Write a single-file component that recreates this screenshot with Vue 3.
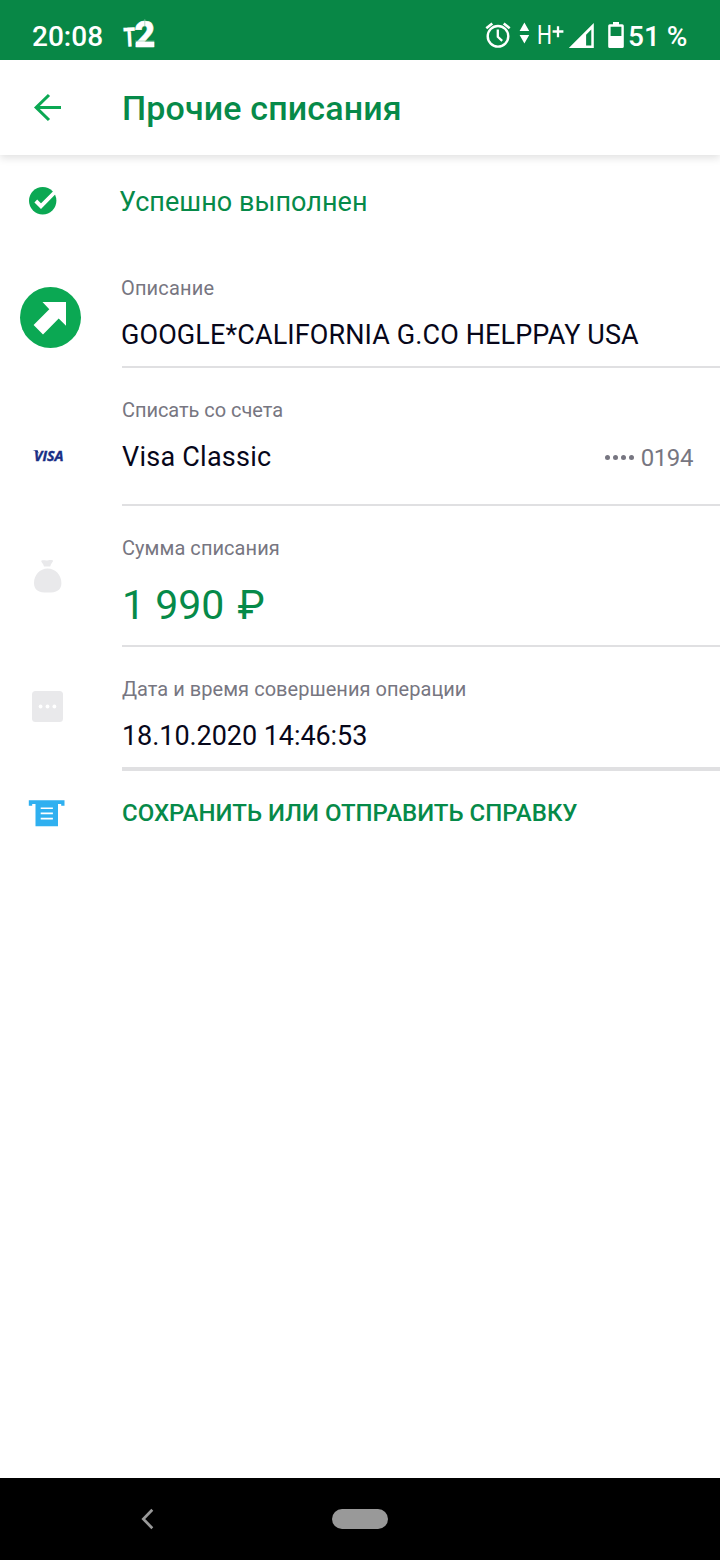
<script setup>
const rows = [
  { kind: 'transfer', label: 'Описание', value: 'GOOGLE*CALIFORNIA G.CO HELPPAY USA' },
  { kind: 'card', label: 'Списать со счета', value: 'Visa Classic', extra: '0194' },
  { kind: 'amount', label: 'Сумма списания', value: '1 990', currency: '₽' },
  { kind: 'date', label: 'Дата и время совершения операции', value: '18.10.2020 14:46:53' },
]
</script>

<template>
  <div class="screen">
    <div class="status">
      <span class="time">20:08</span>
      <svg class="carrier" width="38" height="44" viewBox="120 16 38 44">
        <text class="logo-t" x="124" y="46.800" textLength="12" lengthAdjust="spacingAndGlyphs" transform="rotate(-3 130 46)">T</text>
        <text class="logo-two" x="134.500" y="47" textLength="20.500" lengthAdjust="spacingAndGlyphs">2</text>
        <path d="M135.800 41.500h18.400V47h-18.400z" fill="#fff" />
        <path d="M144.800 19v8M135 41h19.500" stroke="#7fc09d" stroke-width=".6" />
      </svg>
      <span class="grow"></span>
      <svg class="tray" width="144" height="36" viewBox="484 16 144 36">
        <g fill="none" stroke="#fff">
          <circle cx="498" cy="36.300" r="10.300" stroke-width="2.400" />
          <path d="M497.800 29.600v7.200l4.400 4" stroke-width="2.300" />
          <path d="M486.300 28.200l6-4.800M509.700 28.200l-6-4.800" stroke-width="2.600" />
          <path d="M558 26.300v11M552.600 31.500h10.800" stroke-width="2.300" />
        </g>
        <path d="M524.400 22.500l4.800 8.500h-9.600zM524.400 43.400l4.800-8.500h-9.600z" fill="#fff" />
        <text class="net" x="537" y="44" textLength="15" lengthAdjust="spacingAndGlyphs">H</text>
        <path d="M593.800 23v25h-25zM591.300 29.500l-5.200 5.300v10.600h5.200z" fill="#fff" fill-rule="evenodd" />
        <path d="M613 22h6v2.200h3.200a1.600 1.600 0 0 1 1.600 1.600v20.600a1.600 1.600 0 0 1-1.600 1.600h-12.400a1.600 1.600 0 0 1-1.600-1.600v-20.600a1.600 1.600 0 0 1 1.600-1.600h3.200zM610.600 26.700v9.300h10.800v-9.300z" fill="#fff" fill-rule="evenodd" />
      </svg>
      <span class="level">51 %</span>
    </div>

    <header class="bar">
      <div class="cell">
        <svg class="back" width="30" height="30" viewBox="0 0 30 30">
          <path d="M29 14.500H4M17 2L4.200 14.500 17 27" fill="none" stroke="#0ba853" stroke-width="3.100" />
        </svg>
      </div>
      <h1>Прочие списания</h1>
    </header>

    <section class="result">
      <div class="cell">
        <svg class="done" width="28" height="28" viewBox="0 0 28 28">
          <circle cx="13.700" cy="13.700" r="13.700" fill="#0ba853" />
          <path d="M6.800 14l5.200 5.200L26 5" fill="none" stroke="#fff" stroke-width="3.900" />
        </svg>
      </div>
      <p>Успешно выполнен</p>
    </section>

    <section v-for="row in rows" :key="row.kind" class="row" :class="row.kind">
      <div class="cell">
        <svg v-if="row.kind === 'transfer'" class="icon" width="61" height="61" viewBox="0 0 61 61">
          <circle cx="30.500" cy="30.500" r="30.500" fill="#0ba853" />
          <path d="M22.500 15h23.500v23.700l-7.300-7.200-15.700 16L13.600 38l15.700-15.700z" fill="#fff" />
        </svg>
        <svg v-else-if="row.kind === 'card'" class="icon" width="40" height="24" viewBox="0 -4 40 24">
          <text class="visa" x="4" y="13" textLength="29.500" lengthAdjust="spacingAndGlyphs">VISA</text>
          <path d="M2.500 2.300h5l1.300 3.300C7.500 4 5 2.900 2.500 2.300z" fill="#182e86" />
        </svg>
        <svg v-else-if="row.kind === 'amount'" class="icon" width="28" height="34" viewBox="0 0 28 34">
          <path d="M7.300 .7C9-.3 11 .7 13.500.4S17.500-.2 19 .5c.7.500-2.400 3.300-2.800 5.900H10C9.600 3.800 6.500 1.500 7.300.7zM13.600 8.600C21.500 8.600 27.400 15.400 27.400 22.900c0 7.300-4.700 9.600-13.700 9.600S0 30.200 0 22.900C0 15.400 5.800 8.600 13.600 8.600z" fill="#e9e9eb" />
        </svg>
        <svg v-else class="icon" width="31" height="31" viewBox="0 0 31 31">
          <rect width="31" height="31" rx="3.500" fill="#e9e9eb" />
          <circle cx="8.600" cy="15.500" r="1.900" fill="#fff" />
          <circle cx="15.500" cy="15.500" r="1.900" fill="#fff" />
          <circle cx="22.400" cy="15.500" r="1.900" fill="#fff" />
        </svg>
      </div>
      <div class="body">
        <div class="label">{{ row.label }}</div>
        <div class="line">
          <span class="value">{{ row.value }}<span v-if="row.currency" class="currency">{{ ' ' + row.currency }}</span></span>
          <span v-if="row.extra" class="mask"><i v-for="n in 4" :key="n"></i>{{ row.extra }}</span>
        </div>
      </div>
    </section>

    <section class="save">
      <div class="cell">
        <svg class="printer" width="37" height="27" viewBox="0 0 37 27">
          <path d="M.8 .3h35.700v5.400h-3.300V4H30v22.200H7.500V4H4.200v1.700H.8z" fill="#2fb0f0" />
          <path d="M12.700 8.200h12.200M12.700 13.400h12.200M12.700 18.600h12.200" stroke="#fff" stroke-width="1.600" />
        </svg>
      </div>
      <span class="action">СОХРАНИТЬ ИЛИ ОТПРАВИТЬ СПРАВКУ</span>
    </section>

    <nav class="nav">
      <svg class="nav-back" width="14" height="22" viewBox="0 0 14 22">
        <path d="M12.300 1.800L3.300 11l9 9.200" fill="none" stroke="#999" stroke-width="2.700" />
      </svg>
      <span class="pill"></span>
    </nav>
  </div>
</template>

<style>
body {
  margin: 0;
  background: #fff;
}
</style>

<style scoped>
.screen {
  width: 720px;
  height: 1560px;
  display: flex;
  flex-direction: column;
  overflow: hidden;
  background: #fff;
  font-family: Roboto, "Liberation Sans", sans-serif;
  color: #07071a;
}
.status {
  height: 60px;
  flex: none;
  box-sizing: border-box;
  padding: 16px 0 0 32px;
  display: flex;
  align-items: flex-start;
  position: relative;
  z-index: 1;
  background: #088746;
  color: #fff;
}
.time,
.level {
  font-size: 28px;
  font-weight: 500;
  line-height: 41px;
  white-space: nowrap;
}
.time {
  width: 88px;
}
.level {
  width: 92px;
}
.carrier,
.tray,
.card .icon {
  overflow: visible;
}
.grow {
  flex: 1;
}
.logo-t {
  font-size: 27px;
  font-weight: 900;
  fill: #fff;
}
.logo-two {
  font-size: 37px;
  font-weight: 900;
  fill: #fff;
  stroke: #fff;
  stroke-width: 0.6px;
}
.net {
  font-size: 25px;
  font-weight: 400;
  fill: #fff;
}
.bar {
  height: 95px;
  flex: none;
  display: flex;
  align-items: flex-start;
  box-shadow: 0 3px 8px rgba(0, 0, 0, 0.12);
}
.cell {
  width: 122px;
  flex: none;
}
.cell svg {
  display: block;
}
.back {
  margin: 33px 0 0 32px;
}
h1 {
  margin: 0;
  font-size: 34px;
  font-weight: 500;
  line-height: 97px;
  letter-spacing: 0.14px;
  color: #068a49;
  white-space: nowrap;
}
.result {
  height: 91px;
  flex: none;
  display: flex;
}
.done {
  margin: 32px 0 0 29px;
}
.result p {
  margin: 31px 0 0 -3px;
  font-size: 27px;
  line-height: 32px;
  letter-spacing: 0.04px;
  color: #068a49;
}
.row {
  display: flex;
  flex: none;
  height: 122px;
}
.card {
  height: 138px;
}
.amount {
  height: 141px;
}
.date {
  height: 124px;
}
.transfer .icon {
  margin: 41px 0 0 20px;
}
.card .icon {
  margin: 76px 0 0 30px;
}
.amount .icon {
  margin: 54px 0 0 34px;
}
.date .icon {
  margin: 44px 0 0 32px;
}
.visa {
  font-family: "Open Sans", sans-serif;
  font-size: 14.8px;
  font-weight: 700;
  font-style: italic;
  fill: #182e86;
  stroke: #182e86;
  stroke-width: 0.4px;
}
.body {
  flex: 1;
  box-sizing: border-box;
  padding-top: 26px;
  border-bottom: 2px solid #e0e0e2;
}
.date .body {
  border-bottom-width: 4px;
}
.label {
  font-size: 20px;
  line-height: 32px;
  color: #777681;
  white-space: nowrap;
}
.line {
  display: flex;
  justify-content: space-between;
  margin-top: 15px;
  padding-right: 27px;
  font-size: 27px;
  line-height: 32px;
  white-space: nowrap;
}
.transfer .label,
.transfer .value {
  margin-left: -1px;
}
.transfer .label {
  letter-spacing: 0.16px;
}
.transfer .value {
  letter-spacing: 0.11px;
}
.card .label {
  letter-spacing: -0.05px;
}
.card .value {
  letter-spacing: 0.24px;
}
.amount .label {
  letter-spacing: 0.06px;
}
.amount .line {
  margin-top: 17px;
  font-size: 41px;
  line-height: 48px;
  color: #068a49;
}
.currency {
  margin-left: 3px;
}
.date .label {
  letter-spacing: 0.04px;
}
.date .value {
  letter-spacing: -0.06px;
}
.mask {
  display: flex;
  align-items: center;
  font-size: 24px;
  line-height: 34px;
  letter-spacing: -0.4px;
  color: #777681;
}
.mask i {
  width: 5px;
  height: 5px;
  margin: -2px 3px 0 0;
  border-radius: 50%;
  background: #777681;
}
.mask i:nth-child(4) {
  margin-right: 7px;
}
.save {
  display: flex;
  flex: 1;
}
.printer {
  margin: 29px 0 0 28px;
}
.action {
  margin-top: 26px;
  font-size: 24px;
  font-weight: 500;
  line-height: 32px;
  color: #068a49;
  white-space: nowrap;
}
.nav {
  height: 82px;
  flex: none;
  display: flex;
  align-items: center;
  background: #000;
}
.nav-back {
  margin-left: 140px;
}
.pill {
  width: 56px;
  height: 20px;
  margin-left: 178px;
  border-radius: 10px;
  background: #999;
}
</style>
